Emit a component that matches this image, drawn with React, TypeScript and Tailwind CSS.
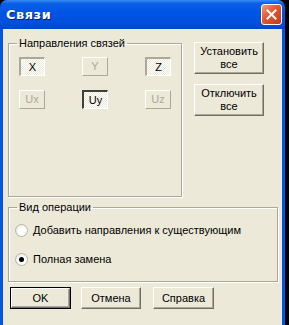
import React from "react";

const font = { fontFamily: '"Liberation Sans", Arial, sans-serif' };

function RaisedButton({ children, className = "" }: { children: React.ReactNode; className?: string }) {
  return (
    <div
      className={`flex items-center justify-center bg-[#ECE9D8] border border-t-white border-l-white border-r-[#716F64] border-b-[#716F64] shadow-[inset_-1px_-1px_0_#ACA899] text-black leading-[13px] text-center ${className}`}
    >
      {children}
    </div>
  );
}

function Toggle({ label, state }: { label: string; state: "on" | "off" | "focus" }) {
  if (state === "off") {
    return (
      <div className="w-[26px] h-[19px] flex items-center justify-center bg-[#ECE9D8] border border-t-white border-l-white border-r-[#ACA899] border-b-[#ACA899] text-[#ACA899]">
        {label}
      </div>
    );
  }
  const border =
    state === "focus"
      ? "border-t-[#404040] border-l-[#404040] border-t-2 border-l-2 border-r-white border-b-white"
      : "border-t-[#ACA899] border-l-[#ACA899] border-t-2 border-l-2 border-r-white border-b-white";
  return (
    <div
      className={`w-[26px] h-[19px] flex items-center justify-center border ${border} bg-[repeating-conic-gradient(#ffffff_0_25%,#ECE9D8_0_50%)] bg-[length:2px_2px] text-black`}
    >
      {label}
    </div>
  );
}

function Radio({ checked, label }: { checked?: boolean; label: string }) {
  return (
    <div className="flex items-center gap-[5px] h-[13px]">
      <div className="w-[13px] h-[13px] rounded-full border border-[#B9B6A6] bg-[radial-gradient(circle_at_60%_60%,#ffffff_40%,#DCD9CC_100%)] flex items-center justify-center">
        {checked && <div className="w-[5px] h-[5px] rounded-full bg-black" />}
      </div>
      <span>{label}</span>
    </div>
  );
}

export default function App() {
  return (
    <div className="w-[289px] h-[325px] bg-black overflow-hidden text-[11px] text-black" style={font}>
      <div className="w-[285px] h-[325px] flex flex-col rounded-t-[7px] overflow-hidden">
        <div className="h-[29px] shrink-0 flex items-center justify-between pl-[6px] pr-[3px] bg-[linear-gradient(#3B8CF6_0%,#0A5FE6_12%,#0055E5_40%,#0050DF_75%,#0046CF_100%)]">
          <span className="text-white font-bold text-[13px] tracking-[0.5px] [text-shadow:1px_1px_0_#0A1E6A]" style={{ fontFamily: '"DejaVu Sans", sans-serif' }}>
            Связи
          </span>
          <div className="w-[21px] h-[21px] rounded-[3px] border border-white bg-[linear-gradient(135deg,#F09A7C_0%,#E2562F_45%,#C6391B_100%)] flex items-center justify-center">
            <svg width="11" height="11" viewBox="0 0 11 11">
              <path d="M1.5 1.5 L9.5 9.5 M9.5 1.5 L1.5 9.5" stroke="white" strokeWidth="2" strokeLinecap="square" />
            </svg>
          </div>
        </div>
        <div className="flex-1 bg-[#ECE9D8] border-x-[3px] border-[#0055E5] pl-[5px] pt-[8px]">
          <div className="flex">
            <fieldset className="w-[174px] h-[160px] border border-[#ACA899] shadow-[inset_1px_1px_0_white,1px_1px_0_white] px-[10px]">
              <legend className="px-[2px] ml-[-2px] leading-[13px]">Направления связей</legend>
              <div className="grid grid-cols-[26px_26px_26px] gap-x-[37px] gap-y-[14px] mt-[7px]">
                <Toggle label="X" state="on" />
                <Toggle label="Y" state="off" />
                <Toggle label="Z" state="on" />
                <Toggle label="Ux" state="off" />
                <Toggle label="Uy" state="focus" />
                <Toggle label="Uz" state="off" />
              </div>
            </fieldset>
            <div className="ml-[12px] mt-[5px] flex flex-col gap-[10px]">
              <RaisedButton className="w-[70px] h-[32px]">Установить<br />все</RaisedButton>
              <RaisedButton className="w-[70px] h-[32px]">Отключить<br />все</RaisedButton>
            </div>
          </div>
          <fieldset className="mt-[4px] w-[270px] h-[81px] border border-[#ACA899] shadow-[inset_1px_1px_0_white,1px_1px_0_white] px-[6px]">
            <legend className="px-[2px] ml-[2px] leading-[13px]">Вид операции</legend>
            <div className="flex flex-col gap-[16px] mt-[10px]">
              <Radio label="Добавить направления к существующим" />
              <Radio checked label="Полная замена" />
            </div>
          </fieldset>
          <div className="flex mt-[5px] ml-[2px] gap-[10px]">
            <div className="w-[61px] h-[22px] border border-black">
              <RaisedButton className="w-full h-full">OK</RaisedButton>
            </div>
            <RaisedButton className="w-[60px] h-[22px]">Отмена</RaisedButton>
            <RaisedButton className="w-[61px] h-[22px] ml-[2px]">Справка</RaisedButton>
          </div>
        </div>
      </div>
    </div>
  );
}
